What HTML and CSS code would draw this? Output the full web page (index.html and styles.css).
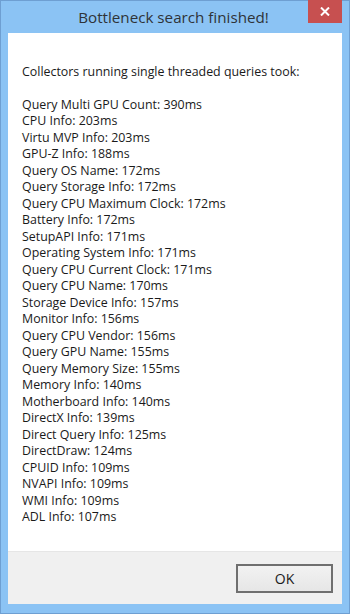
FILE: index.html
```html
<!DOCTYPE html>
<html lang="en">
<head>
  <meta charset="UTF-8" />
  <meta name="viewport" content="width=device-width, initial-scale=1.0" />
  <title>Bottleneck search finished!</title>
  <link rel="stylesheet" href="styles.css">
</head>
<body>
  <div class="window" role="dialog" aria-labelledby="dlg-title">
    <div class="titlebar">
      <h1 id="dlg-title">Bottleneck search finished!</h1>
      <button class="close-btn" aria-label="Close">
        <svg width="10" height="9" viewBox="0 0 10 9" aria-hidden="true">
          <path d="M1 0.5 L9 8.5 M9 0.5 L1 8.5" stroke="#fff" stroke-width="2" />
        </svg>
      </button>
    </div>

    <div class="client">
      <div class="content">
        <p class="intro">Collectors running single threaded queries took:</p>
        <ul class="timings">
          <li>Query Multi GPU Count: 390ms</li>
          <li>CPU Info: 203ms</li>
          <li>Virtu MVP Info: 203ms</li>
          <li>GPU-Z Info: 188ms</li>
          <li>Query OS Name: 172ms</li>
          <li>Query Storage Info: 172ms</li>
          <li>Query CPU Maximum Clock: 172ms</li>
          <li>Battery Info: 172ms</li>
          <li>SetupAPI Info: 171ms</li>
          <li>Operating System Info: 171ms</li>
          <li>Query CPU Current Clock: 171ms</li>
          <li>Query CPU Name: 170ms</li>
          <li>Storage Device Info: 157ms</li>
          <li>Monitor Info: 156ms</li>
          <li>Query CPU Vendor: 156ms</li>
          <li>Query GPU Name: 155ms</li>
          <li>Query Memory Size: 155ms</li>
          <li>Memory Info: 140ms</li>
          <li>Motherboard Info: 140ms</li>
          <li>DirectX Info: 139ms</li>
          <li>Direct Query Info: 125ms</li>
          <li>DirectDraw: 124ms</li>
          <li>CPUID Info: 109ms</li>
          <li>NVAPI Info: 109ms</li>
          <li>WMI Info: 109ms</li>
          <li>ADL Info: 107ms</li>
        </ul>
      </div>

      <div class="footer">
        <button class="ok-btn">OK</button>
      </div>
    </div>
  </div>
</body>
</html>
```

FILE: styles.css
```css
:root {
  --frame-bg: #8bc3f4;
  --frame-edge: #6e9fd2;
  --close-bg: #c75050;
  --text-color: #1a1a1a;
  --footer-bg: #f0f0f0;
}

html, body {
  margin: 0;
  height: 100%;
}

body {
  font-family: "Open Sans", "Noto Sans", sans-serif;
  color: var(--text-color);
  background-color: var(--frame-bg);
}

.window {
  box-sizing: border-box;
  width: 350px;
  height: 614px;
  display: flex;
  flex-direction: column;
  background-color: var(--frame-bg);
  border: 1px solid var(--frame-edge);
  padding: 0 7px 9px 7px;
}

.titlebar {
  position: relative;
  height: 32px;
  flex-shrink: 0;
  display: flex;
  justify-content: center;
  align-items: center;
}

.titlebar h1 {
  margin: 0 3px 0 0;
  font-size: 15.2px;
  font-weight: normal;
  color: #2f3338;
}

.close-btn {
  position: absolute;
  top: -1px;
  right: 0;
  width: 34px;
  height: 23px;
  padding: 0;
  border: none;
  background-color: var(--close-bg);
  display: flex;
  justify-content: center;
  align-items: center;
}

.client {
  flex: 1;
  display: flex;
  flex-direction: column;
  background: #fff;
}

.content {
  flex: 1;
  padding: 31px 14px 0 14px;
  font-size: 12.4px;
  line-height: 16.5px;
}

.intro {
  margin: 0 0 16px 0;
}

.timings {
  list-style: none;
  margin: 0;
  padding: 0;
}

.footer {
  height: 53px;
  flex-shrink: 0;
  box-sizing: border-box;
  background-color: var(--footer-bg);
  border-top: 1px solid #e6e6e6;
  display: flex;
  justify-content: flex-end;
  align-items: flex-start;
  padding: 12px 9px 0 0;
}

.ok-btn {
  width: 97px;
  height: 29px;
  font-family: inherit;
  font-size: 14px;
  color: #1a1a1a;
  background: linear-gradient(#f2f2f2, #e6e6e6);
  border: 2px solid #6f6f6f;
  border-radius: 0;
  padding: 0;
}
```
